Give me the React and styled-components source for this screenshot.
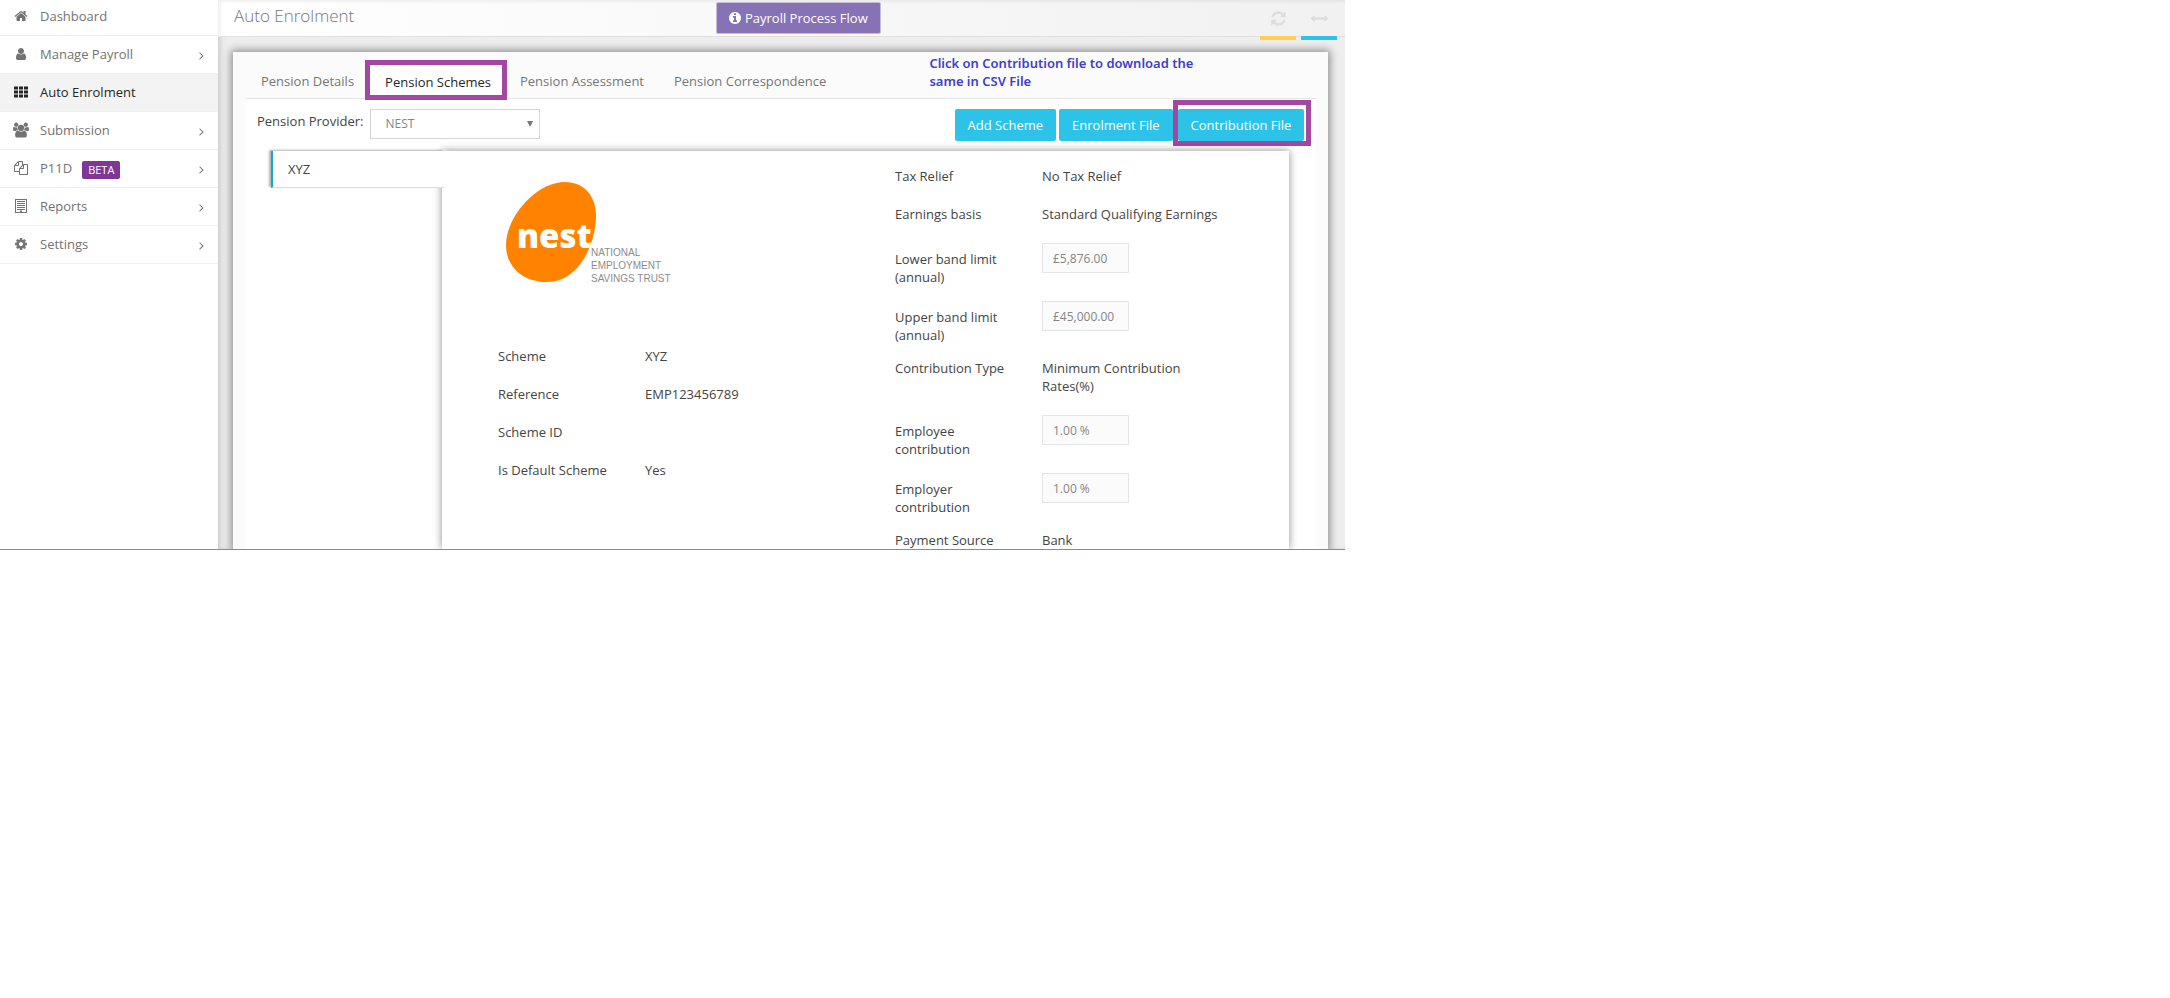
import styled, { createGlobalStyle } from 'styled-components';

const colors = {
  text: '#444',
  muted: '#777',
  dark: '#262626',
  line: '#e5e5e5',
  cyan: '#2dc3e8',
  yellow: '#ffce55',
  violet: '#8772b5',
  mark: '#a347a3',
};

const GlobalStyle = createGlobalStyle`
  * {
    box-sizing: border-box;
  }

  body {
    margin: 0;
    background: #fff;
    color: ${colors.text};
    font-family: 'Open Sans', 'Segoe UI', sans-serif;
    font-size: 13px;
    line-height: 18px;
  }

  button, input, select {
    font: inherit;
  }
`;

const Screen = styled.div`
  display: flex;
  width: 62%;
  min-width: 1200px;
  overflow: hidden;
  border-bottom: 1px solid #a98a45;
`;

const Sidebar = styled.nav`
  flex: none;
  width: 218px;
  background: #fff;
`;

const Menu = styled.ul`
  list-style: none;
  margin: 0;
  padding: 0;
`;

const MenuItem = styled.li`
  border-bottom: 1px solid #f0f0f0;
`;

const MenuLink = styled.a`
  display: flex;
  align-items: center;
  height: ${(props) => (props.$first ? '35px' : '37px')};
  padding: 0 10px ${(props) => (props.$first ? '4px' : '2px')} 13px;
  background: ${(props) => (props.$active ? '#f3f3f3' : '#fff')};
  color: ${(props) => (props.$active ? colors.dark : '#737373')};
  text-decoration: none;
`;

const MenuIcon = styled.span`
  display: flex;
  justify-content: center;
  flex: none;
  width: 16px;
  margin-right: 11px;
`;

const MenuArrow = styled.span`
  display: flex;
  margin-left: auto;
  padding-top: 4px;
`;

const Beta = styled.span`
  margin: 4px 0 0 10px;
  padding: 0 6px;
  border-radius: 2px;
  background: #7e3794;
  color: #fff;
  font-size: 11px;
`;

const Icon = styled.svg`
  display: block;
  fill: currentColor;
`;

const Main = styled.main`
  flex: 1;
  min-width: 0;
  background: #eee;
  box-shadow: inset 4px 0 6px -2px rgba(0, 0, 0, 0.16);
`;

const TopBar = styled.header`
  display: grid;
  grid-template-columns: 19fr auto 18fr;
  align-items: start;
  height: 37px;
  padding: 0 8px 0 16px;
  border-bottom: 1px solid #e0e0e0;
  background: linear-gradient(to right, #fff 0%, #f1f1f1 100%);
  box-shadow: inset 4px 3px 4px -2px rgba(0, 0, 0, 0.08);
`;

const Title = styled.h1`
  margin: 4px 0 0;
  color: #777;
  font-size: 17px;
  font-weight: 300;
  line-height: 24px;
`;

const FlowButton = styled.button`
  display: flex;
  align-items: center;
  gap: 3px;
  height: 32px;
  margin-top: 2px;
  padding: 0 12px 0 11px;
  border: 1px solid #c5bdd8;
  border-radius: 2px;
  background: ${colors.violet};
  color: #fff;
`;

const Tools = styled.div`
  display: flex;
  justify-content: flex-end;
  gap: 5px;
`;

const ToolButton = styled.button`
  display: flex;
  justify-content: center;
  align-items: center;
  width: 36px;
  height: 40px;
  padding: 0;
  border: 0;
  border-bottom: 4px solid ${(props) => props.$color};
  background: none;
  color: #ddd;
`;

const Widget = styled.section`
  margin: 15px 17px 0 15px;
  padding: 6px 12px 0;
  background: #fbfbfb;
  box-shadow: 0 0 8px 2px rgba(0, 0, 0, 0.4);
`;

const TabBar = styled.div`
  display: flex;
  height: 41px;
  border-bottom: 1px solid ${colors.line};
`;

const Tabs = styled.div`
  display: flex;
  align-items: flex-end;
  padding-left: 1px;
`;

const Tab = styled.button`
  height: 36px;
  padding: 2px 15px 0;
  border: 0;
  background: none;
  color: ${colors.muted};
`;

const ActiveTab = styled(Tab)`
  height: 40px;
  margin: 0 -2px -2px -4px;
  padding: 4px 11px 0 15px;
  border: 5px solid ${colors.mark};
  background: #fff;
  color: ${colors.dark};
`;

const Hint = styled.p`
  width: 270px;
  margin: -4px 117px 0 auto;
  color: #4040cc;
  font-family: 'Noto Sans', sans-serif;
  font-size: 13px;
  font-weight: 600;
`;

const Panel = styled.div`
  padding: 0 12px;
  background: #fff;
`;

const Toolbar = styled.div`
  display: flex;
  justify-content: space-between;
  height: 52px;
`;

const Provider = styled.div`
  display: flex;
  align-items: flex-start;
  gap: 7px;
  padding-top: 10px;
`;

const ProviderLabel = styled.label`
  padding-top: 3px;
`;

const SelectBox = styled.div`
  position: relative;
`;

const Select = styled.select`
  appearance: none;
  display: block;
  width: 170px;
  height: 30px;
  padding: 0 14px;
  border: 1px solid #d5d5d5;
  border-radius: 0;
  background: #fff;
  color: #858585;
  font-size: 12px;
`;

const SelectArrow = styled.span`
  position: absolute;
  top: 12px;
  right: 7px;
  border: solid transparent;
  border-width: 6px 3px 0;
  border-top-color: #777;
  pointer-events: none;
`;

const Actions = styled.div`
  display: flex;
  align-items: flex-start;
  padding-top: 1px;
`;

const ActionButton = styled.button`
  height: 32px;
  margin: 9px ${(props) => (props.$gap ? '3px' : '0')} 0 0;
  padding: 0 13px;
  border: 0;
  border-radius: 2px;
  background: ${colors.cyan};
  color: #fff;
`;

const Marked = styled.div`
  display: flex;
  margin-right: -7px;
  padding: 4px 2px 0 0;
  border: 5px solid ${colors.mark};

  button {
    margin: 0;
  }
`;

const Scheme = styled.div`
  display: flex;
  margin: 0 15px 0 14px;
`;

const SchemeTab = styled.button`
  position: relative;
  z-index: 1;
  flex: none;
  width: 173px;
  height: 37px;
  margin-right: -2px;
  padding: 0 15px;
  border: 0;
  border-left: 2px solid #11a9cc;
  border-bottom: 1px solid #ddd;
  background: #fff;
  box-shadow: -2px -1px 2px rgba(0, 0, 0, 0.3);
  color: ${colors.text};
  text-align: left;
`;

const Card = styled.div`
  display: grid;
  grid-template-columns: 397px 1fr;
  flex: 1;
  padding: 16px 16px 0 56px;
  background: #fff;
  box-shadow: 0 0 8px rgba(0, 0, 0, 0.45);
`;

const Logo = styled.svg`
  display: block;
  margin: 8px 0 62px;
`;

const Fields = styled.dl`
  margin: 0;
`;

const Field = styled.div`
  display: grid;
  grid-template-columns: 117px 210px;
  column-gap: 30px;
  margin-bottom: ${(props) => (props.$last ? '0' : '20px')};
`;

const InputField = styled(Field)`
  margin-bottom: 15px;
`;

const Name = styled.dt`
  padding-top: ${(props) => (props.$low ? '7px' : '0')};
`;

const Value = styled.dd`
  max-width: ${(props) => (props.$narrow ? '150px' : 'none')};
  margin: 0;
`;

const Input = styled.input`
  display: block;
  width: 87px;
  height: 30px;
  padding: 0 10px;
  border: 1px solid ${colors.line};
  background: #fbfbfb;
  color: #858585;
  font-size: 12px;
`;

const icons = {
  home: 'M1472 992v480q0 26-19 45t-45 19h-384v-384h-256v384h-384q-26 0-45-19t-19-45v-480q0-1 .5-3t.5-3l575-474 575 474q1 2 1 6zm223-69l-62 74q-8 9-21 11h-3q-13 0-21-7l-692-577-692 577q-12 8-24 7-13-2-21-11l-62-74q-8-10-7-23.5t11-21.5l719-599q32-26 76-26t76 26l244 204v-195q0-14 9-23t23-9h192q14 0 23 9t9 23v408l219 182q10 8 11 21.5t-7 23.5z',
  user: 'M1536 1399q0 109-62.5 187t-150.5 78h-854q-88 0-150.5-78t-62.5-187q0-85 8.5-160.5t31.5-152 58.5-131 94-89 134.5-34.5q131 128 313 128t313-128q76 0 134.5 34.5t94 89 58.5 131 31.5 152 8.5 160.5zm-256-887q0 159-112.5 271.5t-271.5 112.5-271.5-112.5-112.5-271.5 112.5-271.5 271.5-112.5 271.5 112.5 112.5 271.5z',
  grid: 'M0 192h512v384H0zM640 192h512v384H640zM1280 192h512v384h-512zM0 704h512v384H0zM640 704h512v384H640zM1280 704h512v384h-512zM0 1216h512v384H0zM640 1216h512v384H640zM1280 1216h512v384h-512z',
  users:
    'M593 896q-162 5-265 128h-134q-82 0-138-40.5t-56-118.5q0-353 124-353 6 0 43.5 21t97.5 42.5 119 21.5q67 0 133-23-5 37-5 66 0 139 81 256zm1071 637q0 120-73 189.5t-194 69.5h-874q-121 0-194-69.5t-73-189.5q0-53 3.5-103.5t14-109 26.5-108.5 43-97.5 62-81 85.5-53.5 111.5-20q10 0 43 21.5t73 48 107 48 135 21.5 135-21.5 107-48 73-48 43-21.5q61 0 111.5 20t85.5 53.5 62 81 43 97.5 26.5 108.5 14 109 3.5 103.5zm-1024-1277q0 106-75 181t-181 75-181-75-75-181 75-181 181-75 181 75 75 181zm704 384q0 159-112.5 271.5t-271.5 112.5-271.5-112.5-112.5-271.5 112.5-271.5 271.5-112.5 271.5 112.5 112.5 271.5zm576 225q0 78-56 118.5t-138 40.5h-134q-103-123-265-128 81-117 81-256 0-29-5-66 66 23 133 23 59 0 119-21.5t97.5-42.5 43.5-21q124 0 124 353zm-128-609q0 106-75 181t-181 75-181-75-75-181 75-181 181-75 181 75 75 181z',
  files:
    'M1696 384q40 0 68 28t28 68v1216q0 40-28 68t-68 28h-960q-40 0-68-28t-28-68v-288h-544q-40 0-68-28t-28-68v-672q0-40 20-88t48-76l408-408q28-28 76-48t88-20h416q40 0 68 28t28 68v328q68-40 128-40h416zm-544 213l-299 299h299v-299zm-640-384l-299 299h299v-299zm196 647l316-316v-416h-384v416q0 40-28 68t-68 28h-416v640h512v-256q0-40 20-88t48-76zm956 804v-1152h-384v416q0 40-28 68t-68 28h-416v640h896z',
  report:
    'M128 0h1536v1792H128zM256 128v1536h512v-192h256v192h512V128zM384 256h1024v128H384zM384 512h1024v128H384zM384 768h1024v128H384zM384 1024h1024v128H384zM384 1280h1024v128H384z',
  cog: 'M1152 896q0-106-75-181t-181-75-181 75-75 181 75 181 181 75 181-75 75-181zm512-109v222q0 12-8 23t-20 13l-185 28q-19 54-39 91 35 50 107 138 10 12 10 25t-9 23q-27 37-99 108t-94 71q-12 0-26-9l-138-108q-44 23-91 38-16 136-29 186-7 28-36 28h-222q-14 0-24.5-8.5t-11.5-21.5l-28-184q-49-16-90-37l-141 107q-10 9-25 9-14 0-25-11-126-114-165-168-7-10-7-23 0-12 8-23 15-21 51-66.5t54-70.5q-27-50-41-99l-183-27q-13-2-21-12.5t-8-23.5v-222q0-12 8-23t19-13l186-28q14-46 39-92-40-57-107-138-10-12-10-24 0-10 9-23 26-36 98.5-107.5t94.5-71.5q13 0 26 10l138 107q44-23 91-38 16-136 29-186 7-28 36-28h222q14 0 24.5 8.5t11.5 21.5l28 184q49 16 90 37l142-107q9-9 24-9 13 0 25 10 129 119 165 170 7 8 7 22 0 12-8 23-15 21-51 66.5t-54 70.5q26 50 41 98l183 28q13 2 21 12.5t8 23.5z',
  angle:
    'M1171 960q0 13-10 23l-466 466q-10 10-23 10t-23-10l-50-50q-10-10-10-23t10-23l393-393-393-393q-10-10-10-23t10-23l50-50q10-10 23-10t23 10l466 466q10 10 10 23z',
  info: 'M1152 1376v-160q0-14-9-23t-23-9h-96v-512q0-14-9-23t-23-9h-320q-14 0-23 9t-9 23v160q0 14 9 23t23 9h96v320h-96q-14 0-23 9t-9 23v160q0 14 9 23t23 9h448q14 0 23-9t9-23zm-128-896v-160q0-14-9-23t-23-9h-192q-14 0-23 9t-9 23v160q0 14 9 23t23 9h192q14 0 23-9t9-23zm640 416q0 209-103 385.5t-279.5 279.5-385.5 103-385.5-103-279.5-279.5-103-385.5 103-385.5 279.5-279.5 385.5-103 385.5 103 279.5 279.5 103 385.5z',
  refresh:
    'M1639 1056q0 5-1 7-64 268-268 434.5t-478 166.5q-146 0-282.5-55t-243.5-157l-129 129q-19 19-45 19t-45-19-19-45v-448q0-26 19-45t45-19h448q26 0 45 19t19 45-19 45l-137 137q71 66 161 102t187 36q134 0 250-65t186-179q11-17 53-117 8-23 30-23h192q13 0 22.5 9.5t9.5 22.5zm25-800v448q0 26-19 45t-45 19h-448q-26 0-45-19t-19-45 19-45l138-138q-148-137-349-137-134 0-250 65t-186 179q-11 17-53 117-8 23-30 23h-199q-13 0-22.5-9.5t-9.5-22.5v-7q65-268 270-434.5t480-166.5q146 0 284 55.5t245 156.5l130-129q19-19 45-19t45 19 19 45z',
  resize:
    'M1792 896q0 26-19 45l-256 256q-19 19-45 19t-45-19-19-45v-128h-1024v128q0 26-19 45t-45 19-45-19l-256-256q-19-19-19-45t19-45l256-256q19-19 45-19t45 19 19 45v128h1024v-128q0-26 19-45t45-19 45 19l256 256q19 19 19 45z',
};

const Glyph = ({ name, size = 14 }) => (
  <Icon
    width={size}
    height={size}
    viewBox={name === 'users' ? '0 0 1920 1792' : '0 0 1792 1792'}
    fillRule={name === 'report' ? 'evenodd' : 'nonzero'}
    aria-hidden="true"
  >
    <path d={icons[name]} />
  </Icon>
);

const menu = [
  { label: 'Dashboard', icon: 'home', plain: true },
  { label: 'Manage Payroll', icon: 'user' },
  { label: 'Auto Enrolment', icon: 'grid', plain: true, active: true },
  { label: 'Submission', icon: 'users', size: 16 },
  { label: 'P11D', icon: 'files', beta: true },
  { label: 'Reports', icon: 'report' },
  { label: 'Settings', icon: 'cog' },
];

const schemeInfo = [
  ['Scheme', 'XYZ'],
  ['Reference', 'EMP123456789'],
  ['Scheme ID', ''],
  ['Is Default Scheme', 'Yes'],
];

const TextField = ({ name, value, narrow, last }) => (
  <Field $last={last}>
    <Name>{name}</Name>
    <Value $narrow={narrow}>{value}</Value>
  </Field>
);

const AmountField = ({ id, name, value }) => (
  <InputField>
    <Name $low>
      <label htmlFor={id}>{name}</label>
    </Name>
    <Value>
      <Input id={id} type="text" defaultValue={value} readOnly />
    </Value>
  </InputField>
);

const NestLogo = () => (
  <Logo width="180" height="110" viewBox="0 0 180 110" role="img" aria-label="nest">
    <path
      d="M67 7C86 7 98 21 98 41C98 67 82 107 49 107C25 107 8 92 8 70C8 42 38 7 67 7Z"
      fill="#ff8200"
    />
    <text x="19" y="73" fill="#fff" fontFamily="'Open Sans', sans-serif" fontSize="33" fontWeight="800">
      nest
    </text>
    <g fill="#8c8c8c" fontFamily="'Liberation Sans', Arial, sans-serif" fontSize="10">
      <text x="93" y="81">NATIONAL</text>
      <text x="93" y="94">EMPLOYMENT</text>
      <text x="93" y="107">SAVINGS TRUST</text>
    </g>
  </Logo>
);

const App = () => {
  return (
    <>
      <GlobalStyle />
      <Screen>
        <Sidebar>
          <Menu>
            {menu.map((item, index) => (
              <MenuItem key={item.label}>
                <MenuLink href="#" $first={index === 0} $active={item.active}>
                  <MenuIcon>
                    <Glyph name={item.icon} size={item.size} />
                  </MenuIcon>
                  {item.label}
                  {item.beta && <Beta>BETA</Beta>}
                  {!item.plain && (
                    <MenuArrow>
                      <Glyph name="angle" size={13} />
                    </MenuArrow>
                  )}
                </MenuLink>
              </MenuItem>
            ))}
          </Menu>
        </Sidebar>
        <Main>
          <TopBar>
            <Title>Auto Enrolment</Title>
            <FlowButton type="button">
              <Glyph name="info" />
              Payroll Process Flow
            </FlowButton>
            <Tools>
              <ToolButton type="button" aria-label="Refresh" $color={colors.yellow}>
                <Glyph name="refresh" size={17} />
              </ToolButton>
              <ToolButton type="button" aria-label="Resize" $color={colors.cyan}>
                <Glyph name="resize" size={17} />
              </ToolButton>
            </Tools>
          </TopBar>
          <Widget>
            <TabBar>
              <Tabs>
                <Tab type="button">Pension Details</Tab>
                <ActiveTab type="button">Pension Schemes</ActiveTab>
                <Tab type="button">Pension Assessment</Tab>
                <Tab type="button">Pension Correspondence</Tab>
              </Tabs>
              <Hint>Click on Contribution file to download the same in CSV File</Hint>
            </TabBar>
            <Panel>
              <Toolbar>
                <Provider>
                  <ProviderLabel htmlFor="provider">Pension Provider:</ProviderLabel>
                  <SelectBox>
                    <Select id="provider" defaultValue="NEST">
                      <option>NEST</option>
                    </Select>
                    <SelectArrow />
                  </SelectBox>
                </Provider>
                <Actions>
                  <ActionButton type="button" $gap>
                    Add Scheme
                  </ActionButton>
                  <ActionButton type="button">Enrolment File</ActionButton>
                  <Marked>
                    <ActionButton type="button">Contribution File</ActionButton>
                  </Marked>
                </Actions>
              </Toolbar>
              <Scheme>
                <SchemeTab type="button">XYZ</SchemeTab>
                <Card>
                  <div>
                    <NestLogo />
                    <Fields>
                      {schemeInfo.map(([name, value]) => (
                        <TextField key={name} name={name} value={value} />
                      ))}
                    </Fields>
                  </div>
                  <Fields>
                    <TextField name="Tax Relief" value="No Tax Relief" />
                    <TextField name="Earnings basis" value="Standard Qualifying Earnings" />
                    <AmountField id="lower" name="Lower band limit (annual)" value="£5,876.00" />
                    <AmountField id="upper" name="Upper band limit (annual)" value="£45,000.00" />
                    <TextField name="Contribution Type" value="Minimum Contribution Rates(%)" narrow />
                    <AmountField id="employee" name="Employee contribution" value="1.00 %" />
                    <AmountField id="employer" name="Employer contribution" value="1.00 %" />
                    <TextField name="Payment Source" value="Bank" last />
                  </Fields>
                </Card>
              </Scheme>
            </Panel>
          </Widget>
        </Main>
      </Screen>
    </>
  );
};

export default App;
